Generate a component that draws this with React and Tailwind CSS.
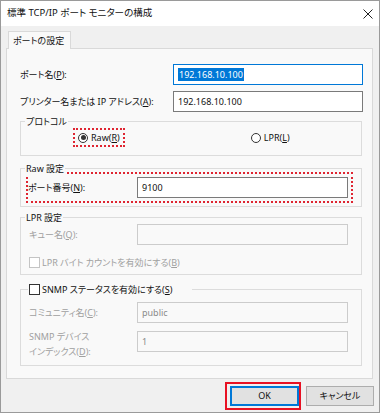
import React from "react";

// mnemonic letter, underlined like a Windows label
const U = ({ children }) => <span className="underline underline-offset-[1px]">{children}</span>;

const Field = ({ children, disabled, focused, className = "" }) => (
    <div
        className={`flex items-center pl-[4px] ${
            focused
                ? "border border-[#0078d7] bg-white"
                : disabled
                ? "border border-[#cccccc] bg-[#f9f9f9] text-[#8a8a8a]"
                : "border border-[#7a7a7a] bg-white"
        } ${className}`}
    >
        {children}
    </div>
);

const Group = ({ label, className = "", labelClass = "", children }) => (
    <div className={`relative ml-[13px] w-[342px] border border-[#dcdcdc] ${className}`}>
        <div className={`absolute -top-[7px] bg-[#f9f9f9] leading-[13px] ${labelClass}`}>{label}</div>
        {children}
    </div>
);

const Radio = ({ checked }) => (
    <span className="flex h-[10px] w-[10px] items-center justify-center rounded-full border border-[#333333] bg-white">
        {checked && <span className="h-[5px] w-[5px] rounded-full bg-[#333333]" />}
    </span>
);

const Check = ({ disabled }) => (
    <span className={`h-[11px] w-[11px] border bg-white ${disabled ? "border-[#c4c4c4]" : "border-[#333333]"}`} />
);

export default function App() {
    return (
        <div className="flex h-[413px] w-[380px] flex-col overflow-hidden whitespace-nowrap border border-[#9a9a9a] bg-[#f0f0f0] font-['Noto_Sans','Noto_Sans_CJK_JP',sans-serif] text-[9px] text-[#111] [font-feature-settings:'palt']">
            {/* Title bar */}
            <div className="flex h-[25px] shrink-0 items-center justify-between bg-white pl-[6px] pr-[6px]">
                <span className="text-[9.5px]">標準 TCP/IP ポート モニターの構成</span>
                <svg width="10" height="10" viewBox="0 0 10 10" className="text-[#222]">
                    <path d="M0.5 0.5 L9.5 9.5 M9.5 0.5 L0.5 9.5" stroke="currentColor" strokeWidth="1" />
                </svg>
            </div>

            {/* Tab strip */}
            <div className="flex pl-[7px] pt-[5px]">
                <div className="relative z-10 -mb-[1px] flex h-[18px] items-center border border-b-0 border-[#d9d9d9] bg-[#f9f9f9] pl-[4px] pr-[6px]">
                    ポートの設定
                </div>
            </div>

            {/* Tab panel */}
            <div className="ml-[5px] flex h-[331px] w-[367px] shrink-0 flex-col border border-[#d9d9d9] bg-[#f9f9f9] pt-[15px]">
                <div className="flex h-[21px] items-center pl-[13px]">
                    <span className="w-[153px]">ポート名(<U>P</U>):</span>
                    <Field focused className="h-[21px] w-[190px]">
                        <span className="bg-[#0078d7] px-[1px] leading-[13px] text-white">192.168.10.100</span>
                    </Field>
                </div>
                <div className="mt-[6px] flex h-[21px] items-center pl-[13px]">
                    <span className="w-[153px]">プリンター名または IP アドレス(<U>A</U>):</span>
                    <Field className="h-[21px] w-[190px]">192.168.10.100</Field>
                </div>

                {/* Protocol */}
                <Group label="プロトコル" className="mt-[9px] h-[35px]" labelClass="left-[4px] px-[1px]">
                    <div className="flex items-start pt-[6px]">
                        <div className="ml-[52px] flex h-[19px] items-center gap-[3px] border-2 border-dotted border-[#df2531] pl-[3px] pr-[3px]">
                            <Radio checked />
                            <span>
                                Raw(<U>R</U>)
                            </span>
                        </div>
                        <div className="ml-[126px] flex h-[19px] items-center gap-[3px]">
                            <Radio />
                            <span>
                                LPR(<U>L</U>)
                            </span>
                        </div>
                    </div>
                </Group>

                {/* Raw settings */}
                <Group label="Raw 設定" className="mt-[12px] h-[39px]" labelClass="left-[4px] px-[1px]">
                    <div className="ml-[5px] mt-[3px] flex h-[31px] w-[327px] items-center border-2 border-dotted border-[#df2531]">
                        <span className="w-[109px]">ポート番号(<U>N</U>):</span>
                        <Field className="h-[21px] w-[211px]">9100</Field>
                    </div>
                </Group>

                {/* LPR settings */}
                <Group label="LPR 設定" className="mt-[10px] h-[58px]" labelClass="left-[4px] px-[1px]">
                    <div className="mt-[6px] flex h-[21px] items-center pl-[8px] text-[#a0a0a0]">
                        <span className="w-[108px]">キュー名(<U>Q</U>):</span>
                        <Field disabled className="h-[21px] w-[211px]" />
                    </div>
                    <div className="mt-[11px] flex items-center gap-[2px] pl-[8px] text-[#a0a0a0]">
                        <Check disabled />
                        <span>LPR バイト カウントを有効にする(<U>B</U>)</span>
                    </div>
                </Group>

                {/* SNMP */}
                <Group
                    label={
                        <span className="flex items-center gap-[2px]">
                            <Check />
                            <span>SNMP ステータスを有効にする(<U>S</U>)</span>
                        </span>
                    }
                    className="mt-[14px] h-[77px]"
                    labelClass="left-[7px] pl-[1px] pr-[20px]"
                >
                    <div className="mt-[12px] flex h-[21px] items-center pl-[8px] text-[#a0a0a0]">
                        <span className="w-[108px]">コミュニティ名(<U>C</U>):</span>
                        <Field disabled className="h-[21px] w-[211px]">public</Field>
                    </div>
                    <div className="mt-[8px] flex items-start pl-[8px] text-[#a0a0a0]">
                        <span className="-mt-[2px] w-[108px] leading-[15px]">
                            SNMP デバイス
                            <br />
                            インデックス(<U>D</U>):
                        </span>
                        <Field disabled className="h-[21px] w-[211px]">1</Field>
                    </div>
                </Group>
            </div>

            {/* Buttons */}
            <div className="mt-[3px] flex items-center justify-end pr-[5px]">
                <div className="flex h-[28px] w-[76px] items-center border-2 border-[#e81123] pl-[3px]">
                    <button className="flex h-[20px] w-[69px] items-center justify-center border-2 border-[#0078d7] bg-[#e1e1e1]">
                        OK
                    </button>
                </div>
                <button className="ml-[5px] flex h-[20px] w-[68px] items-center justify-center border border-[#adadad] bg-[#e1e1e1]">
                    キャンセル
                </button>
            </div>
        </div>
    );
}
